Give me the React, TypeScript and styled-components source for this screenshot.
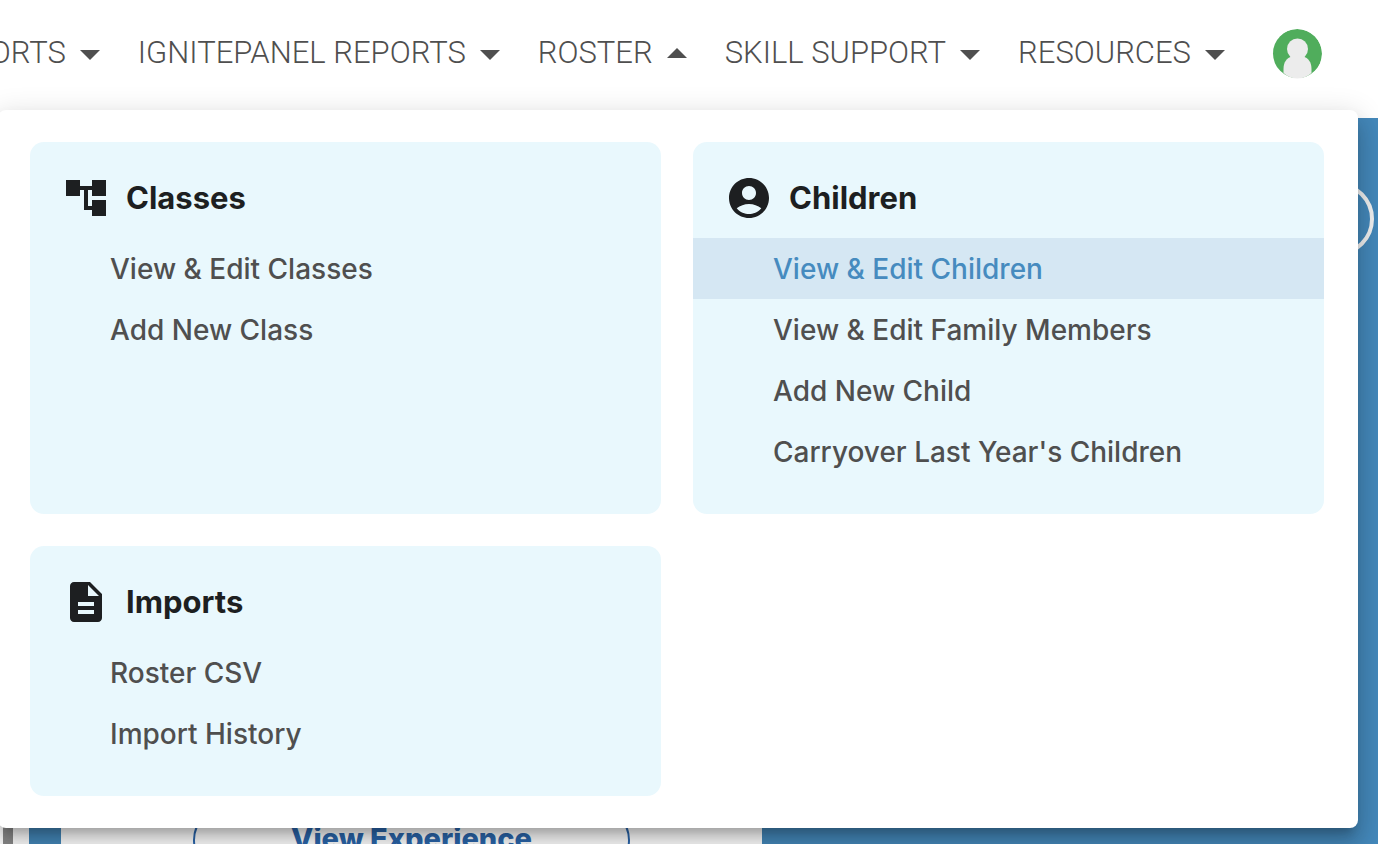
import React from "react";
import styled, { createGlobalStyle } from "styled-components";

const colors = {
  blue: "#468bbf",
  sea: "#4488ba",
  ink: "#1d1f21",
  text: "#4f4f4f",
  card: "#e9f8fd",
  hover: "#d5e7f3",
};

const GlobalStyle = createGlobalStyle`
  *, *::before, *::after { box-sizing: border-box; }
  body { margin: 0; background: #fff; font-family: Inter, "Liberation Sans", sans-serif; }
  h2, ul { margin: 0; padding: 0; }
  ul { list-style: none; }
  button { font: inherit; cursor: pointer; }
`;

const Page = styled.div`
  display: flex;
  flex-direction: column;
  height: 100vh;
  overflow: hidden;
`;

const Header = styled.header`
  position: relative;
  z-index: 1;
  flex: none;
`;

const Bar = styled.div`
  display: flex;
  align-items: center;
  justify-content: flex-end;
  gap: 33px;
  height: 118px;
  padding: 0 56px 10px 0;
  overflow: hidden;
`;

const Nav = styled.nav`
  display: flex;
  flex: none;
  gap: 24px;
`;

const NavButton = styled.button`
  display: flex;
  align-items: center;
  padding: 0;
  border: 0;
  background: none;
  color: ${colors.text};
  font-family: Roboto, "Liberation Sans", sans-serif;
  font-size: 31px;
  font-weight: 300;
  line-height: 48px;
  white-space: nowrap;
`;

const NavLabel = styled.span`
  padding-bottom: 2px;
`;

const Icon = styled.svg`
  display: block;
  flex: none;
  width: 48px;
  height: 48px;
  fill: currentColor;
`;

const AvatarButton = styled.button`
  flex: none;
  width: 50px;
  height: 50px;
  padding: 0;
  border: 0;
  border-radius: 50%;
  overflow: hidden;
  background: none;

  svg {
    display: block;
    fill: #ececec;
  }
`;

const Panel = styled.div`
  position: absolute;
  top: 110px;
  left: -2px;
  right: 20px;
  display: grid;
  grid-template-columns: 1fr 1fr;
  gap: 32px;
  padding: 32px 34px 32px 32px;
  border-radius: 8px;
  background: #fff;
  box-shadow:
    0 10px 10px -6px rgba(0, 0, 0, 0.2),
    0 16px 20px 2px rgba(0, 0, 0, 0.14),
    0 6px 28px 4px rgba(0, 0, 0, 0.12);
`;

const Group = styled.section`
  padding: 32px 0;
  border-radius: 14px;
  background: ${colors.card};
`;

const GroupHeader = styled.div`
  display: flex;
  align-items: center;
  gap: 16px;
  margin-bottom: 16px;
  padding: 0 32px;
  color: ${colors.ink};
`;

const GroupTitle = styled.h2`
  font-size: 31px;
  font-weight: 700;
  line-height: 48px;
`;

const MenuLink = styled.a<{ $active?: boolean }>`
  display: block;
  padding: 1px 32px 0 80px;
  background: ${(p) => (p.$active ? colors.hover : "transparent")};
  color: ${(p) => (p.$active ? colors.blue : colors.text)};
  font-size: 28px;
  font-weight: 500;
  line-height: 60px;
  text-decoration: none;
`;

const Main = styled.main`
  flex: 1;
  min-height: 0;
  background: ${colors.sea};
`;

const Hero = styled.div`
  display: flex;
  justify-content: flex-end;
  padding: 64px 4px;
`;

const RoundButton = styled.button`
  width: 74px;
  height: 74px;
  border: 4px solid #f0f0f0;
  border-radius: 50%;
  background: none;
`;

const Content = styled.div`
  display: flex;
  gap: 32px;
`;

const Rail = styled.div`
  flex: none;
  width: 29px;
  padding: 0 16px 0 3px;
  background: #fff;
`;

const RailThumb = styled.div`
  height: 100%;
  background: #8a8a8a;
`;

const Experience = styled.article`
  display: flex;
  justify-content: center;
  width: 701px;
  padding: 488px 132px 48px;
  background: #fff;
`;

const ExperienceButton = styled.button`
  flex: 1;
  height: 64px;
  padding: 0 24px 2px;
  border: 2px solid #2b67ad;
  border-radius: 32px;
  background: none;
  color: #2b67ad;
  font-size: 29px;
  font-weight: 800;
  line-height: 48px;
`;

const icons = {
  down: "M7 10l5 5 5-5z",
  up: "M7 14l5-5 5 5z",
  tree: "M22 11V3h-7v3H9V3H2v8h7V8h2v10h4v3h7v-8h-7v3h-2V8h2v3z",
  person:
    "M12 2C6.48 2 2 6.48 2 12s4.48 10 10 10 10-4.48 10-10S17.52 2 12 2zm0 4c1.93 0 3.5 1.57 3.5 3.5S13.93 13 12 13s-3.5-1.57-3.5-3.5S10.07 6 12 6zm0 14c-2.03 0-4.430-.82-6.140-2.880C7.550 15.800 9.680 15 12 15s4.450.8 6.140 2.120C16.430 19.180 14.030 20 12 20z",
  file: "M14 2H6c-1.100 0-2 .9-2 2v16c0 1.100.9 2 2 2h12c1.100 0 2-.9 2-2V8l-6-6zm2 16H8v-2h8v2zm0-4H8v-2h8v2zm-3-5V3.500L18.500 9H13z",
};

const navItems = [
  { label: "REPORTS" },
  { label: "IGNITEPANEL REPORTS" },
  { label: "ROSTER", open: true },
  { label: "SKILL SUPPORT" },
  { label: "RESOURCES" },
];

const groups = [
  {
    title: "Classes",
    icon: icons.tree,
    links: ["View & Edit Classes", "Add New Class"],
  },
  {
    title: "Children",
    icon: icons.person,
    links: [
      "View & Edit Children",
      "View & Edit Family Members",
      "Add New Child",
      "Carryover Last Year's Children",
    ],
  },
  {
    title: "Imports",
    icon: icons.file,
    links: ["Roster CSV", "Import History"],
  },
];

const activeLink = "View & Edit Children";

function Glyph({ d }: { d: string }) {
  return (
    <Icon viewBox="0 0 24 24" aria-hidden="true">
      <path d={d} />
    </Icon>
  );
}

export default function App() {
  return (
    <Page>
      <GlobalStyle />
      <Header>
        <Bar>
          <Nav>
            {navItems.map((item) => (
              <NavButton key={item.label} type="button" aria-expanded={!!item.open}>
                <NavLabel>{item.label}</NavLabel>
                <Glyph d={item.open ? icons.up : icons.down} />
              </NavButton>
            ))}
          </Nav>
          <AvatarButton type="button" aria-label="Account">
            <svg width="50" height="50" viewBox="0 0 50 50" aria-hidden="true">
              <circle cx="25.5" cy="24.500" r="24.500" fill="#50ad5c" />
              <circle cx="25.5" cy="20" r="10.5" />
              <path d="M11.500 44V40C11.500 33 15 29 19.500 27.500H31.500C36 29 39.500 33 39.500 40V44C36 47.500 31 49.500 25.500 49.500S15 47.500 11.500 44Z" />
            </svg>
          </AvatarButton>
        </Bar>
        <Panel>
          {groups.map((group) => (
            <Group key={group.title}>
              <GroupHeader>
                <Glyph d={group.icon} />
                <GroupTitle>{group.title}</GroupTitle>
              </GroupHeader>
              <ul>
                {group.links.map((link) => (
                  <li key={link}>
                    <MenuLink href="#" $active={link === activeLink}>
                      {link}
                    </MenuLink>
                  </li>
                ))}
              </ul>
            </Group>
          ))}
        </Panel>
      </Header>
      <Main>
        <Hero>
          <RoundButton type="button" aria-label="Next" />
        </Hero>
        <Content>
          <Rail>
            <RailThumb />
          </Rail>
          <Experience>
            <ExperienceButton type="button">View Experience</ExperienceButton>
          </Experience>
        </Content>
      </Main>
    </Page>
  );
}
